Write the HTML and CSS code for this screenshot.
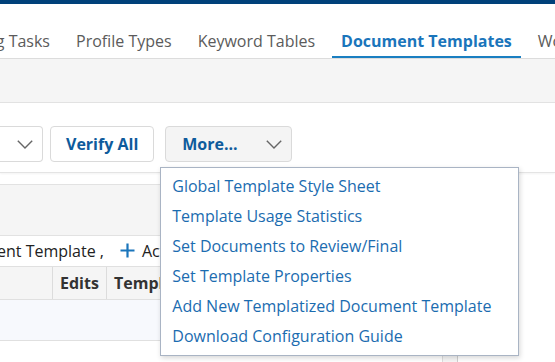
FILE: index.html
```html
<!DOCTYPE html>
<html lang="en">
<head>
<meta charset="utf-8">
<title>Document Templates</title>
<link rel="stylesheet" href="styles.css">
</head>
<body>
<div class="topbar"></div>
<nav class="tabs">
  <a class="tab clip">Routing Tasks</a>
  <a class="tab">Profile Types</a>
  <a class="tab">Keyword Tables</a>
  <a class="tab active">Document Templates</a>
  <a class="tab">Workflows</a>
</nav>
<div class="band"></div>
<div class="toolbar">
  <div class="select">
    <svg class="chev" width="16" height="9" viewBox="0 0 16 9"><polyline points="0.8,0.8 8,8 15.2,0.8" fill="none" stroke="#666" stroke-width="1.4"/></svg>
  </div>
  <button class="btn verify">Verify All</button>
  <div class="more-wrap">
    <button class="btn more"><span>More...</span><svg class="chev" width="16" height="9" viewBox="0 0 16 9"><polyline points="0.8,0.8 8,8 15.2,0.8" fill="none" stroke="#666" stroke-width="1.4"/></svg></button>
    <ul class="menu">
      <li>Global Template Style Sheet</li>
      <li>Template Usage Statistics</li>
      <li>Set Documents to Review/Final</li>
      <li>Set Template Properties</li>
      <li>Add New Templatized Document Template</li>
      <li>Download Configuration Guide</li>
    </ul>
  </div>
</div>
<div class="content">
  <div class="panel">
    <div class="panel-main">
      <div class="panel-head"></div>
      <div class="crumbs">
        <span class="crumb-lead"><span>Document Template ,</span></span>
        <svg class="plus" width="15" height="15" viewBox="0 0 15 15"><path d="M7.5 0.5v14M0.5 7.5h14" stroke="#1a75bb" stroke-width="2.2" fill="none"/></svg>
        <span class="crumb-add">Actions</span>
      </div>
      <div class="thead">
        <div class="th th-first"></div>
        <div class="th th-edits">Edits</div>
        <div class="th th-templ">Template Name</div>
      </div>
      <div class="trow"></div>
    </div>
    <div class="scroll"></div>
  </div>
</div>
</body>
</html>
```

FILE: styles.css
```css
html, body {
  margin: 0;
  padding: 0;
}
body {
  width: 555px;
  height: 362px;
  overflow: hidden;
  background: #fff;
  font-family: "Open Sans", "Noto Sans", sans-serif;
  font-size: 16px;
  color: #222;
}
.topbar {
  height: 4px;
  background: #00417a;
}
.tabs {
  display: flex;
  gap: 7px;
  height: 54px;
  border-bottom: 1px solid #dcdcdc;
  white-space: nowrap;
  overflow: hidden;
}
.tab {
  display: flex;
  align-items: flex-end;
  box-sizing: border-box;
  height: 55px;
  padding: 0 9.5px 4px;
  border-bottom: 3px solid transparent;
  color: #5b5b5b;
  line-height: 22px;
  flex: none;
}
.tab.clip {
  width: 59.5px;
  padding-left: 0;
  justify-content: flex-end;
  overflow: hidden;
}
.tab.active {
  color: #1a75bb;
  font-weight: 700;
  border-bottom-color: #1a7fc1;
}
.band {
  height: 43px;
  background: #f5f5f5;
  border-bottom: 1px solid #e2e2e2;
}
.toolbar {
  display: flex;
  align-items: center;
  padding: 23px 0 10px;
  border-bottom: 1px solid #e4e4e4;
  box-shadow: 0 1px 2px rgba(0, 0, 0, 0.05);
}
.select {
  box-sizing: border-box;
  width: 43px;
  height: 36px;
  display: flex;
  align-items: center;
  justify-content: flex-end;
  padding-right: 9px;
  border: 1px solid #dadada;
  border-left: none;
  border-radius: 0 4px 4px 0;
  background: #fff;
}
.chev {
  display: block;
  flex: none;
}
.btn {
  box-sizing: border-box;
  height: 36px;
  margin: 0;
  padding: 0 15px;
  border: 1px solid #dadada;
  border-radius: 4px;
  background: #fff;
  font-family: inherit;
  font-size: 16px;
  font-weight: 700;
  color: #0e5b9c;
  line-height: 22px;
  white-space: nowrap;
}
.btn.verify {
  margin-left: 7px;
}
.more-wrap {
  position: relative;
  margin-left: 11px;
}
.btn.more {
  width: 127px;
  display: flex;
  align-items: center;
  justify-content: space-between;
  padding: 0 9px 0 16px;
  background: #f4f4f4;
}
.btn.more .chev {
  margin-top: 1px;
}
.menu {
  position: absolute;
  left: -5px;
  top: 41px;
  box-sizing: border-box;
  width: 359px;
  margin: 0;
  padding: 3px 0 4px;
  list-style: none;
  background: #fff;
  border: 1px solid #a9b4c4;
  box-shadow: 1px 2px 5px rgba(0, 0, 0, 0.16);
  z-index: 10;
}
.menu li {
  height: 30px;
  line-height: 30px;
  padding-left: 11px;
  color: #1b6cb0;
  white-space: nowrap;
}
.content {
  padding-top: 11px;
}
.panel {
  display: flex;
  width: 458px;
}
.panel-main {
  width: 442px;
}
.panel-head {
  height: 50px;
  background: #f5f5f5;
  border-top: 1px solid #e2e2e2;
  border-bottom: 1px solid #e2e2e2;
}
.crumbs {
  display: flex;
  align-items: center;
  height: 30px;
  border-bottom: 1px solid #e0e0e0;
  white-space: nowrap;
  overflow: hidden;
  color: #222;
}
.crumb-lead {
  display: flex;
  justify-content: flex-end;
  width: 104px;
  overflow: hidden;
  flex: none;
}
.plus {
  display: block;
  flex: none;
  margin-left: 16px;
  margin-top: -1px;
}
.crumb-add {
  margin-left: 7px;
}
.thead {
  display: flex;
  height: 32px;
  background: #f5f5f5;
  border-bottom: 1px solid #e0e0e0;
  font-weight: 700;
  color: #333;
  white-space: nowrap;
  overflow: hidden;
}
.th {
  display: flex;
  align-items: center;
  box-sizing: border-box;
  flex: none;
}
.th-first {
  width: 53px;
  border-right: 1px solid #dcdcdc;
}
.th-edits {
  width: 54px;
  padding-left: 7px;
  border-right: 1px solid #dcdcdc;
}
.th-templ {
  padding-left: 7px;
}
.trow {
  height: 40px;
  background: #f7f9fd;
  border-bottom: 1px solid #e0e0e0;
}
.scroll {
  box-sizing: border-box;
  width: 16px;
  height: 178px;
  background: #f6f6f6;
  border-left: 1px solid #dedede;
  border-right: 1px solid #cfcfcf;
}
```
